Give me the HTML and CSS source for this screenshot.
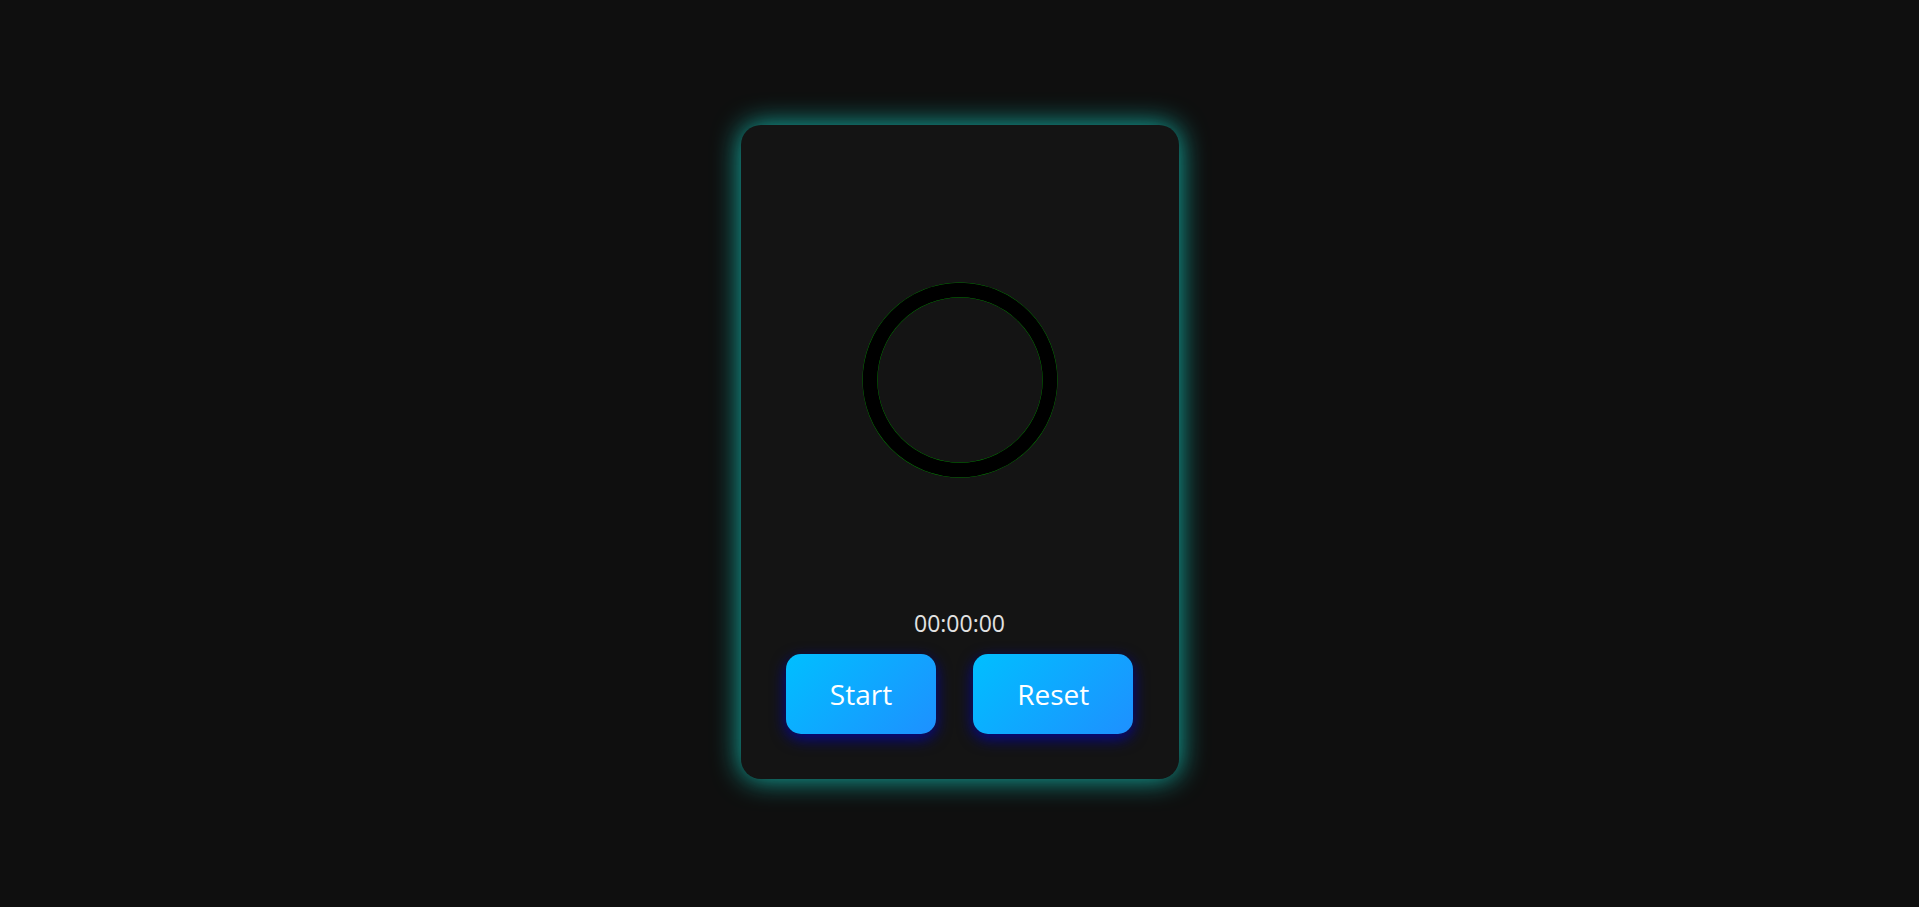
FILE: index.html
```html
<!DOCTYPE html>
<html lang="en">
<head>
<meta charset="utf-8">
<title>Stopwatch</title>
<link rel="stylesheet" href="styles.css">
</head>
<body>
  <main class="card">
    <div class="dial">
      <svg class="ring" width="200" height="200" viewBox="0 0 200 200">
        <circle cx="100" cy="100" r="90" fill="none" stroke="#00a000" stroke-width="15"/>
        <circle cx="100" cy="100" r="90" fill="none" stroke="#000" stroke-width="14.6"/>
      </svg>
    </div>
    <div class="time">00:00:00</div>
    <div class="controls">
      <button class="btn">Start</button>
      <button class="btn">Reset</button>
    </div>
  </main>
</body>
</html>
```

FILE: styles.css
```css
* { box-sizing: border-box; }

html, body {
  margin: 0;
  height: 100%;
}

body {
  background: #0f0f0f;
  font-family: "Open Sans", "DejaVu Sans", sans-serif;
  display: flex;
  align-items: center;
  justify-content: center;
}

.card {
  width: 438px;
  margin-bottom: 3px;
  padding: 45px;
  background: #141414;
  border-radius: 20px;
  box-shadow: 0 0 28px rgba(20, 225, 210, 0.8);
  display: flex;
  flex-direction: column;
  align-items: center;
}

.dial {
  height: 420px;
  width: 100%;
  display: flex;
  align-items: center;
  justify-content: center;
}

.ring { display: block; }

.time {
  margin-top: 18px;
  font-size: 23px;
  line-height: 31px;
  color: #e2e2e2;
}

.controls {
  margin-top: 15px;
  display: flex;
  gap: 37px;
  justify-content: center;
  width: 100%;
}

.btn {
  height: 80px;
  padding: 0 44px;
  border: none;
  border-radius: 15px;
  background: linear-gradient(135deg, #00bfff, #1e90ff);
  color: #fff;
  font-family: "Open Sans", "DejaVu Sans", sans-serif;
  font-size: 28px;
  box-shadow: 0 5px 15px rgba(5, 5, 150, 0.95);
  cursor: pointer;
}
```
